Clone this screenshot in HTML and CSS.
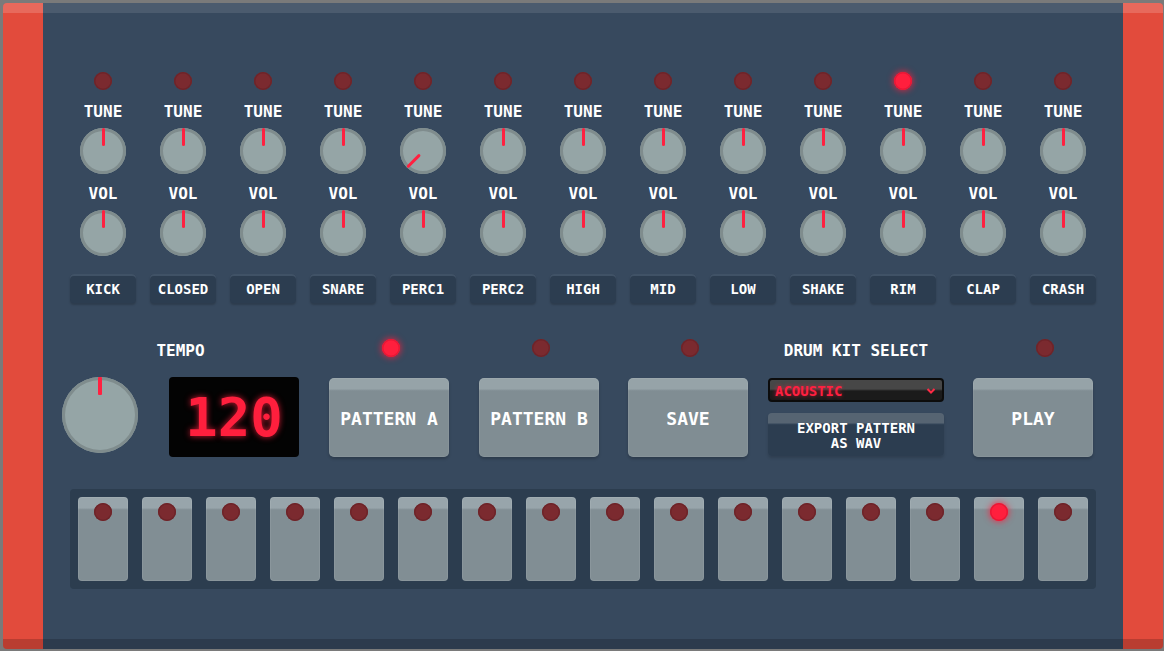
FILE: index.html
```html
<!DOCTYPE html>
<html>
<head>
<meta charset="utf-8">
<link rel="stylesheet" href="styles.css">
</head>
<body>
<div class="machine">
  <div class="side"></div>
  <div class="main">
    <div class="channels">
      <div class="ch"><span class="led"></span><span class="lbl">TUNE</span><div class="knob"></div><span class="lbl lbl-vol">VOL</span><div class="knob"></div><div class="chbtn">KICK</div></div>
      <div class="ch"><span class="led"></span><span class="lbl">TUNE</span><div class="knob"></div><span class="lbl lbl-vol">VOL</span><div class="knob"></div><div class="chbtn">CLOSED</div></div>
      <div class="ch"><span class="led"></span><span class="lbl">TUNE</span><div class="knob"></div><span class="lbl lbl-vol">VOL</span><div class="knob"></div><div class="chbtn">OPEN</div></div>
      <div class="ch"><span class="led"></span><span class="lbl">TUNE</span><div class="knob"></div><span class="lbl lbl-vol">VOL</span><div class="knob"></div><div class="chbtn">SNARE</div></div>
      <div class="ch"><span class="led"></span><span class="lbl">TUNE</span><div class="knob knob-turned"></div><span class="lbl lbl-vol">VOL</span><div class="knob"></div><div class="chbtn">PERC1</div></div>
      <div class="ch"><span class="led"></span><span class="lbl">TUNE</span><div class="knob"></div><span class="lbl lbl-vol">VOL</span><div class="knob"></div><div class="chbtn">PERC2</div></div>
      <div class="ch"><span class="led"></span><span class="lbl">TUNE</span><div class="knob"></div><span class="lbl lbl-vol">VOL</span><div class="knob"></div><div class="chbtn">HIGH</div></div>
      <div class="ch"><span class="led"></span><span class="lbl">TUNE</span><div class="knob"></div><span class="lbl lbl-vol">VOL</span><div class="knob"></div><div class="chbtn">MID</div></div>
      <div class="ch"><span class="led"></span><span class="lbl">TUNE</span><div class="knob"></div><span class="lbl lbl-vol">VOL</span><div class="knob"></div><div class="chbtn">LOW</div></div>
      <div class="ch"><span class="led"></span><span class="lbl">TUNE</span><div class="knob"></div><span class="lbl lbl-vol">VOL</span><div class="knob"></div><div class="chbtn">SHAKE</div></div>
      <div class="ch"><span class="led on"></span><span class="lbl">TUNE</span><div class="knob"></div><span class="lbl lbl-vol">VOL</span><div class="knob"></div><div class="chbtn">RIM</div></div>
      <div class="ch"><span class="led"></span><span class="lbl">TUNE</span><div class="knob"></div><span class="lbl lbl-vol">VOL</span><div class="knob"></div><div class="chbtn">CLAP</div></div>
      <div class="ch"><span class="led"></span><span class="lbl">TUNE</span><div class="knob"></div><span class="lbl lbl-vol">VOL</span><div class="knob"></div><div class="chbtn">CRASH</div></div>
    </div>

    <div class="transport">
      <div class="grp grp-tempo">
        <div class="head"><span class="lbl">TEMPO</span></div>
        <div class="tempo-body">
          <div class="knob knob-big"></div>
          <div class="display">120</div>
        </div>
      </div>
      <div class="grp grp-pa">
        <div class="head head-led"><span class="led on"></span></div>
        <div class="bigbtn">PATTERN A</div>
      </div>
      <div class="grp grp-pb">
        <div class="head head-led"><span class="led"></span></div>
        <div class="bigbtn">PATTERN B</div>
      </div>
      <div class="grp grp-save">
        <div class="head head-led"><span class="led"></span></div>
        <div class="bigbtn">SAVE</div>
      </div>
      <div class="grp grp-kit">
        <div class="head"><span class="lbl">DRUM KIT SELECT</span></div>
        <div class="select"><span>ACOUSTIC</span><svg class="chev" width="10" height="6" viewBox="0 0 10 6"><path d="M1.5 1 L5 4.5 L8.5 1" fill="none" stroke="#ff2a45" stroke-width="2"/></svg></div>
        <div class="export">EXPORT PATTERN<br>AS WAV</div>
      </div>
      <div class="grp grp-play">
        <div class="head head-led head-play"><span class="led"></span></div>
        <div class="bigbtn">PLAY</div>
      </div>
    </div>

    <div class="steps">
      <div class="step"><span class="led"></span></div>
      <div class="step"><span class="led"></span></div>
      <div class="step"><span class="led"></span></div>
      <div class="step"><span class="led"></span></div>
      <div class="step"><span class="led"></span></div>
      <div class="step"><span class="led"></span></div>
      <div class="step"><span class="led"></span></div>
      <div class="step"><span class="led"></span></div>
      <div class="step"><span class="led"></span></div>
      <div class="step"><span class="led"></span></div>
      <div class="step"><span class="led"></span></div>
      <div class="step"><span class="led"></span></div>
      <div class="step"><span class="led"></span></div>
      <div class="step"><span class="led"></span></div>
      <div class="step"><span class="led on"></span></div>
      <div class="step"><span class="led"></span></div>
    </div>
  </div>
  <div class="side"></div>
</div>
</body>
</html>
```

FILE: styles.css
```css
* { box-sizing: border-box; }
html, body { margin: 0; padding: 0; }
body {
  background: #7a7a7a;
  padding: 3px 1px 2px 3px;
  width: 1164px;
  height: 651px;
  overflow: hidden;
  font-family: "DejaVu Sans Mono", monospace;
  font-weight: bold;
  color: #fff;
}
.machine {
  display: grid;
  grid-template-columns: 40px 1fr 40px;
  width: 1160px;
  height: 646px;
  border-radius: 4px;
  overflow: hidden;
}
.side {
  background: #e24b3c;
  box-shadow: inset 0 10px 0 rgba(255,255,255,0.17), inset 0 -10px 0 rgba(0,0,0,0.18);
}
.main {
  background: #37495e;
  box-shadow: inset 0 10px 0 rgba(255,255,255,0.1), inset 0 -10px 0 rgba(0,0,0,0.18);
  padding-top: 69px;
  display: flex;
  flex-direction: column;
}

/* channels */
.channels {
  display: flex;
  padding-left: 20px;
}
.ch {
  width: 80px;
  display: flex;
  flex-direction: column;
  align-items: center;
}
.led {
  display: block;
  width: 18px;
  height: 18px;
  border-radius: 50%;
  background: #7b2a2f;
  box-shadow: inset 0 0 0 1.5px #6e2429;
}
.led.on {
  background: #ff1f3d;
  box-shadow: inset 0 0 0 1.5px #e81836, 0 0 6px 1px rgba(255,30,60,0.75);
}
.lbl {
  display: block;
  font-size: 16px;
  line-height: 20px;
  margin-top: 12px;
  white-space: nowrap;
}
.lbl-vol { margin-top: 10px; }
.knob {
  position: relative;
  width: 46px;
  height: 46px;
  border-radius: 50%;
  background: #95a5a6;
  box-shadow: inset 0 0 0 3px #7f8c8d;
  margin-top: 6px;
}
.knob::after {
  content: "";
  position: absolute;
  left: 50%;
  top: 0;
  width: 3px;
  height: 18px;
  margin-left: -1.5px;
  border-radius: 1.5px;
  background: #ff2040;
  transform-origin: 1.5px 23px;
}
.knob-turned::after { transform: rotate(-135deg); }
.chbtn {
  margin-top: 18px;
  width: 66px;
  height: 29px;
  border-radius: 4px;
  background: #2c3d50;
  box-shadow: inset 0 2px 0 #405266, 0 2px 2px rgba(0,0,0,0.18);
  font-size: 14px;
  line-height: 31px;
  text-align: center;
}

/* transport */
.transport {
  display: flex;
  align-items: flex-start;
  margin-top: 35px;
  padding-left: 19px;
}
.grp {
  display: flex;
  flex-direction: column;
}
.head {
  height: 20px;
  display: flex;
  justify-content: center;
  align-items: center;
}
.head .lbl { margin-top: 6px; }
.head-led { padding-left: 4px; }
.head-play { padding-left: 24px; }
.grp-tempo { width: 237px; }
.tempo-body {
  display: flex;
  justify-content: space-between;
  margin-top: 19px;
}
.knob-big {
  width: 76px;
  height: 76px;
  margin-top: 0;
}
.knob-big::after {
  width: 4px;
  margin-left: -2px;
  height: 18px;
  border-radius: 1px;
}
.display {
  width: 130px;
  height: 80px;
  background: #030303;
  border-radius: 4px;
  color: #ff1f3d;
  font-size: 54px;
  line-height: 82px;
  text-align: center;
  text-shadow: 0 0 6px rgba(255,31,61,0.8);
}
.grp-pa { margin-left: 30px; }
.grp-pb { margin-left: 30px; }
.grp-save { margin-left: 29px; }
.grp-kit { margin-left: 20px; width: 176px; }
.grp-play { margin-left: 29px; }
.bigbtn {
  margin-top: 20px;
  width: 120px;
  height: 79px;
  border-radius: 5px;
  background: linear-gradient(#96a3a8 0, #96a3a8 11px, #87949a 12px, #808d93 13px, #808d93 100%);
  box-shadow: inset 0 0 0 1px rgba(255,255,255,0.06), 0 2px 3px rgba(0,0,0,0.2);
  font-size: 18px;
  line-height: 82px;
  text-align: center;
}
.select {
  margin-top: 20px;
  height: 24px;
  border: 2px solid #0c0c0c;
  border-radius: 4px;
  background: linear-gradient(#474747 0, #474747 45%, #1b1b1b 55%, #1b1b1b 100%);
  display: flex;
  align-items: center;
  justify-content: space-between;
  padding: 1px 6px 0 5px;
  color: #ff2040;
  font-size: 14px;
  text-shadow: 0 0 4px rgba(255,32,64,0.7);
}
.chev { display: block; }
.export {
  margin-top: 11px;
  height: 43px;
  border-radius: 4px;
  background: linear-gradient(#566472 0, #566472 10px, #34465a 11px, #2c3d50 12px, #2c3d50 100%);
  box-shadow: 0 2px 3px rgba(0,0,0,0.15);
  font-size: 14px;
  line-height: 15px;
  text-align: center;
  padding-top: 8px;
}

/* steps */
.steps {
  margin: 32px 27px 0;
  padding: 8px;
  display: flex;
  gap: 14px;
  background: #2c3d4f;
  border-radius: 4px;
}
.step {
  width: 50px;
  height: 84px;
  border-radius: 4px;
  background: linear-gradient(#98a5ab 0, #98a5ab 11px, #89969c 12px, #818e94 13px, #818e94 100%);
  box-shadow: inset 0 0 0 1px rgba(255,255,255,0.08);
  display: flex;
  justify-content: center;
  padding-top: 6px;
}
```
